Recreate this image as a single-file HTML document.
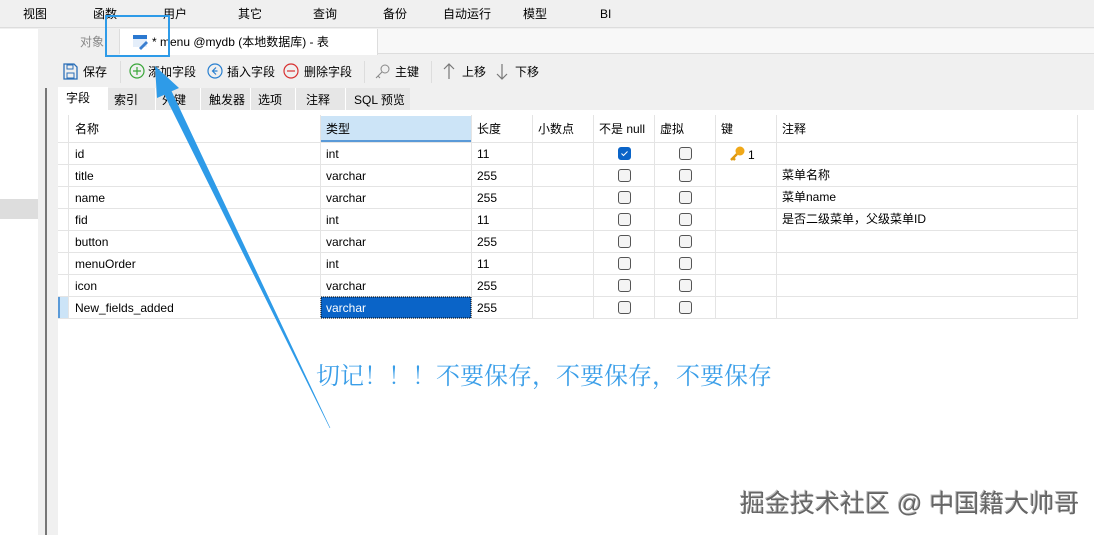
<!DOCTYPE html>
<html><head><meta charset="utf-8"><style>
*{margin:0;padding:0;box-sizing:border-box}
body{width:1094px;height:535px;overflow:hidden;background:#f0f0f0;position:relative;font-family:"Liberation Sans","Noto Sans CJK SC",sans-serif;font-size:12px;line-height:14px;color:#000}
.a{position:absolute;white-space:nowrap}
.cb{position:absolute;width:13px;height:13px;border:1px solid #555;border-radius:3px;background:#f4f4f4}
</style></head><body>
<!-- menu -->
<div class="a" style="left:0;top:0;width:1094px;height:28px;background:#f0f0f0;border-bottom:1px solid #ddd"></div>
<div class="a" style="left:23px;top:7px">视图</div>
<div class="a" style="left:93px;top:7px">函数</div>
<div class="a" style="left:163px;top:7px">用户</div>
<div class="a" style="left:238px;top:7px">其它</div>
<div class="a" style="left:313px;top:7px">查询</div>
<div class="a" style="left:383px;top:7px">备份</div>
<div class="a" style="left:443px;top:7px">自动运行</div>
<div class="a" style="left:523px;top:7px">模型</div>
<div class="a" style="left:600px;top:7px">BI</div>
<!-- sidebar -->
<div class="a" style="left:0;top:29px;width:38px;height:506px;background:#fff"></div>
<div class="a" style="left:0;top:199px;width:38px;height:20px;background:#ddd"></div>
<div class="a" style="left:38px;top:29px;width:18px;height:506px;background:#f0f0f0"></div>
<div class="a" style="left:45px;top:88px;width:2px;height:447px;background:#777"></div>
<!-- tab row -->
<div class="a" style="left:56px;top:29px;width:1038px;height:25px;background:#f8f8f8;border-bottom:1px solid #ddd"></div>
<div class="a" style="left:56px;top:29px;width:64px;height:25px;background:#f0f0f0;border-right:1px solid #ddd"></div>
<div class="a" style="left:80px;top:35px;color:#888">对象</div>
<div class="a" style="left:120px;top:29px;width:258px;height:26px;background:#fff;border-right:1px solid #ddd"></div>
<svg class="a" style="left:132px;top:33px" width="18" height="18"><rect x="1" y="2" width="14" height="12" fill="#e4eefa"/><rect x="1" y="2" width="14" height="4" fill="#2a78d0"/><path d="M7 15 L14 8 L16 10 L9 17 Z" fill="#3a7fd0"/></svg>
<div class="a" style="left:152px;top:35px">* menu @mydb (本地数据库) - 表</div>
<!-- toolbar -->
<svg class="a" style="left:62px;top:63px" width="16" height="17"><path d="M2 1h10l3 3v12H2z" fill="none" stroke="#2c6fb8" stroke-width="1.3"/><rect x="5" y="2" width="6" height="4" fill="none" stroke="#2c6fb8"/><rect x="5" y="10" width="7" height="5" fill="none" stroke="#2c6fb8"/></svg>
<div class="a" style="left:83px;top:65px">保存</div>
<div class="a" style="left:120px;top:61px;width:1px;height:22px;background:#ddd"></div>
<svg class="a" style="left:129px;top:63px" width="16" height="16"><circle cx="8" cy="8" r="7" fill="none" stroke="#3aa63a" stroke-width="1.2"/><path d="M8 4v8M4 8h8" stroke="#3aa63a" stroke-width="1.2"/></svg>
<div class="a" style="left:148px;top:65px">添加字段</div>
<svg class="a" style="left:207px;top:63px" width="16" height="16"><circle cx="8" cy="8" r="7" fill="none" stroke="#2a80d0" stroke-width="1.2"/><path d="M9 4.5L5.5 8 9 11.5M5.5 8h5" fill="none" stroke="#2a80d0" stroke-width="1.2"/></svg>
<div class="a" style="left:227px;top:65px">插入字段</div>
<svg class="a" style="left:283px;top:63px" width="16" height="16"><circle cx="8" cy="8" r="7" fill="none" stroke="#d83030" stroke-width="1.2"/><path d="M4 8h8" stroke="#d83030" stroke-width="1.2"/></svg>
<div class="a" style="left:304px;top:65px">删除字段</div>
<div class="a" style="left:364px;top:61px;width:1px;height:22px;background:#ddd"></div>
<svg class="a" style="left:374px;top:63px" width="17" height="17"><circle cx="11" cy="6" r="4" fill="none" stroke="#888"/><path d="M8 9L2 15M4 13l2 2" stroke="#888" fill="none"/></svg>
<div class="a" style="left:395px;top:65px">主键</div>
<div class="a" style="left:431px;top:61px;width:1px;height:22px;background:#ddd"></div>
<svg class="a" style="left:442px;top:63px" width="14" height="17"><path d="M7 1v15M2 6l5-5 5 5" fill="none" stroke="#777" stroke-width="1.2"/></svg>
<div class="a" style="left:462px;top:65px">上移</div>
<svg class="a" style="left:495px;top:63px" width="14" height="17"><path d="M7 1v15M2 11l5 5 5-5" fill="none" stroke="#777" stroke-width="1.2"/></svg>
<div class="a" style="left:515px;top:65px">下移</div>
<!-- subtabs -->
<div class="a" style="left:108px;top:88px;width:302px;height:22px;background:#e6e6e6"></div>
<div class="a" style="left:58px;top:87px;width:50px;height:25px;background:#fff"></div>
<div class="a" style="left:155px;top:88px;width:1px;height:22px;background:#fff"></div>
<div class="a" style="left:200px;top:88px;width:1px;height:22px;background:#fff"></div>
<div class="a" style="left:250px;top:88px;width:1px;height:22px;background:#fff"></div>
<div class="a" style="left:295px;top:88px;width:1px;height:22px;background:#fff"></div>
<div class="a" style="left:345px;top:88px;width:1px;height:22px;background:#fff"></div>
<div class="a" style="left:66px;top:91px">字段</div>
<div class="a" style="left:114px;top:93px">索引</div>
<div class="a" style="left:162px;top:93px">外键</div>
<div class="a" style="left:209px;top:93px">触发器</div>
<div class="a" style="left:258px;top:93px">选项</div>
<div class="a" style="left:306px;top:93px">注释</div>
<div class="a" style="left:354px;top:93px">SQL 预览</div>
<!-- grid -->
<div class="a" style="left:58px;top:110px;width:1036px;height:425px;background:#fff"></div>
<svg class="a" style="left:58px;top:115px" width="1036" height="205">
<g stroke="#e4e4e4" stroke-width="1">
<line x1="0" y1="27.5" x2="1020" y2="27.5"/><line x1="0" y1="49.5" x2="1020" y2="49.5"/><line x1="0" y1="71.5" x2="1020" y2="71.5"/><line x1="0" y1="93.5" x2="1020" y2="93.5"/><line x1="0" y1="115.5" x2="1020" y2="115.5"/><line x1="0" y1="137.5" x2="1020" y2="137.5"/><line x1="0" y1="159.5" x2="1020" y2="159.5"/><line x1="0" y1="181.5" x2="1020" y2="181.5"/><line x1="0" y1="203.5" x2="1020" y2="203.5"/>
<line x1="10.5" y1="0" x2="10.5" y2="204"/><line x1="262.5" y1="0" x2="262.5" y2="204"/><line x1="413.5" y1="0" x2="413.5" y2="204"/><line x1="474.5" y1="0" x2="474.5" y2="204"/><line x1="535.5" y1="0" x2="535.5" y2="204"/><line x1="596.5" y1="0" x2="596.5" y2="204"/><line x1="657.5" y1="0" x2="657.5" y2="204"/><line x1="718.5" y1="0" x2="718.5" y2="204"/><line x1="1019.5" y1="0" x2="1019.5" y2="204"/>
</g>
<rect x="263" y="1" width="150" height="25" fill="#cce4f7"/><rect x="263" y="25" width="150" height="2" fill="#5a9ad8"/>
<rect x="0" y="182" width="10" height="21" fill="#cce4f7"/><rect x="0" y="182" width="2" height="21" fill="#5a9ad8"/>
<rect x="263" y="182" width="150" height="21" fill="#0a64c8" stroke="#000" stroke-dasharray="1 1"/>
</svg>
<div class="a" style="left:75px;top:122px">名称</div><div class="a" style="left:326px;top:122px">类型</div><div class="a" style="left:477px;top:122px">长度</div><div class="a" style="left:538px;top:122px">小数点</div><div class="a" style="left:599px;top:122px">不是 null</div><div class="a" style="left:660px;top:122px">虚拟</div><div class="a" style="left:721px;top:122px">键</div><div class="a" style="left:782px;top:122px">注释</div>
<div class="a" style="left:75px;top:147px">id</div><div class="a" style="left:326px;top:147px">int</div><div class="a" style="left:477px;top:147px">11</div>
<div class="a" style="left:75px;top:169px">title</div><div class="a" style="left:326px;top:169px">varchar</div><div class="a" style="left:477px;top:169px">255</div><div class="a" style="left:782px;top:168px">菜单名称</div>
<div class="a" style="left:75px;top:191px">name</div><div class="a" style="left:326px;top:191px">varchar</div><div class="a" style="left:477px;top:191px">255</div><div class="a" style="left:782px;top:190px">菜单name</div>
<div class="a" style="left:75px;top:213px">fid</div><div class="a" style="left:326px;top:213px">int</div><div class="a" style="left:477px;top:213px">11</div><div class="a" style="left:782px;top:212px">是否二级菜单，父级菜单ID</div>
<div class="a" style="left:75px;top:235px">button</div><div class="a" style="left:326px;top:235px">varchar</div><div class="a" style="left:477px;top:235px">255</div>
<div class="a" style="left:75px;top:257px">menuOrder</div><div class="a" style="left:326px;top:257px">int</div><div class="a" style="left:477px;top:257px">11</div>
<div class="a" style="left:75px;top:279px">icon</div><div class="a" style="left:326px;top:279px">varchar</div><div class="a" style="left:477px;top:279px">255</div>
<div class="a" style="left:75px;top:301px">New_fields_added</div><div class="a" style="left:326px;top:301px;color:#fff">varchar</div><div class="a" style="left:477px;top:301px">255</div>
<div class="cb" style="left:618px;top:147px;background:#0a64c8;border-color:#0a64c8"></div><svg class="a" style="left:618px;top:147px" width="13" height="13"><path d="M3.5 6.5l2 2 4-4" stroke="#fff" fill="none"/></svg>
<div class="cb" style="left:679px;top:147px"></div>
<div class="cb" style="left:618px;top:169px"></div><div class="cb" style="left:679px;top:169px"></div>
<div class="cb" style="left:618px;top:191px"></div><div class="cb" style="left:679px;top:191px"></div>
<div class="cb" style="left:618px;top:213px"></div><div class="cb" style="left:679px;top:213px"></div>
<div class="cb" style="left:618px;top:235px"></div><div class="cb" style="left:679px;top:235px"></div>
<div class="cb" style="left:618px;top:257px"></div><div class="cb" style="left:679px;top:257px"></div>
<div class="cb" style="left:618px;top:279px"></div><div class="cb" style="left:679px;top:279px"></div>
<div class="cb" style="left:618px;top:301px"></div><div class="cb" style="left:679px;top:301px"></div>
<svg class="a" style="left:729px;top:146px" width="18" height="16"><circle cx="11" cy="5" r="4.5" fill="#f0a818"/><path d="M8 8L2 14M4 12l2 2" stroke="#e09a10" stroke-width="2.5" fill="none"/></svg>
<div class="a" style="left:748px;top:148px">1</div>
<!-- annotations -->
<div class="a" style="left:105px;top:15px;width:65px;height:42px;border:2px solid #2e9be8"></div>
<svg class="a" style="left:0;top:0" width="1094" height="535"><polygon points="155,66 179,88 171.6,91.3 330.3,428 329.7,428 164.4,94.7 157,98" fill="#2e9be8"/></svg>
<div class="a" style="left:316px;top:363px;font-family:'Liberation Serif','Noto Serif CJK SC',serif;font-size:24px;line-height:28px;color:#3a9ee8">切记！！！不要保存，不要保存，不要保存</div>
<div class="a" style="left:740px;top:489px;font-size:25px;line-height:30px;color:#666;text-shadow:1px 1px 0 #fff,-1px -1px 0 #bbb">掘金技术社区 @ 中国籍大帅哥</div>
</body></html>
